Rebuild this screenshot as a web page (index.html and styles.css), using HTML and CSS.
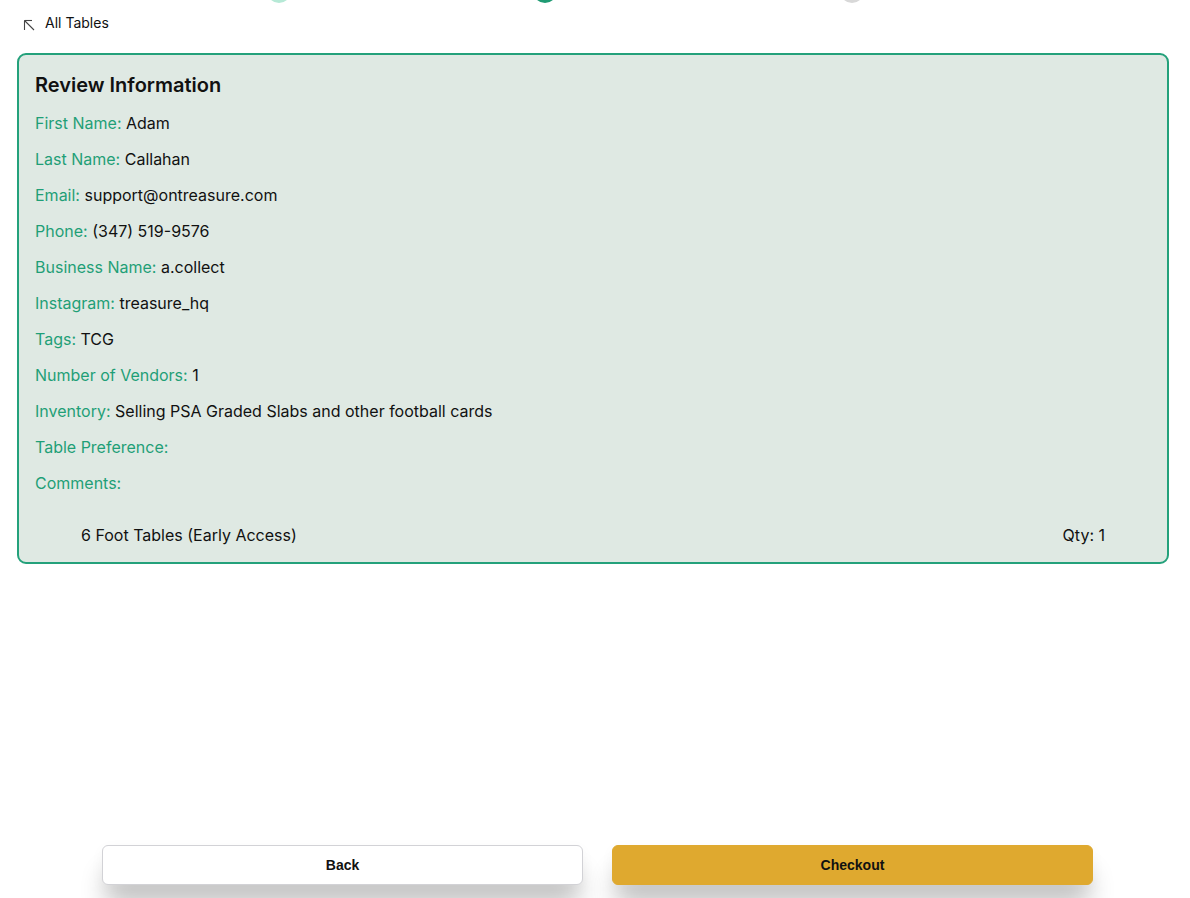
FILE: index.html
```html
<!DOCTYPE html>
<html lang="en">
<head>
<meta charset="utf-8">
<title>Review Information</title>
<link rel="stylesheet" href="styles.css">
</head>
<body>
<div class="page">
  <div class="stepper">
    <span class="step step-done"></span>
    <span class="step step-active"></span>
    <span class="step step-todo"></span>
  </div>
  <a class="back-link" href="#">
    <svg class="back-icon" width="14" height="14" viewBox="0 0 14 14" fill="none" stroke="#444" stroke-width="1.1">
      <path d="M2.5 2.5 L12 12"/>
      <path d="M2.5 2.5 L2.5 12"/>
      <path d="M2.5 2.5 L10 2.5"/>
    </svg>
    <span>All Tables</span>
  </a>
  <section class="card">
    <h2 class="card-title">Review Information</h2>
    <p class="row"><span class="label">First Name:</span> Adam</p>
    <p class="row"><span class="label">Last Name:</span> Callahan</p>
    <p class="row"><span class="label">Email:</span> support@ontreasure.com</p>
    <p class="row"><span class="label">Phone:</span> (347) 519-9576</p>
    <p class="row"><span class="label">Business Name:</span> a.collect</p>
    <p class="row"><span class="label">Instagram:</span> treasure_hq</p>
    <p class="row"><span class="label">Tags:</span> TCG</p>
    <p class="row"><span class="label">Number of Vendors:</span> 1</p>
    <p class="row"><span class="label">Inventory:</span> Selling PSA Graded Slabs and other football cards</p>
    <p class="row"><span class="label">Table Preference:</span></p>
    <p class="row"><span class="label">Comments:</span></p>
    <div class="item">
      <span>6 Foot Tables (Early Access)</span>
      <span>Qty: 1</span>
    </div>
  </section>
  <footer class="footer">
    <button class="btn btn-back">Back</button>
    <button class="btn btn-checkout">Checkout</button>
  </footer>
</div>
</body>
</html>
```
FILE: styles.css
```css
* { box-sizing: border-box; }
html, body { margin: 0; padding: 0; background: #fff; }
body {
  font-family: Inter, "Noto Sans", sans-serif;
  color: #111;
  overflow: hidden;
}
.page {
  min-height: 100vh;
  height: 898px;
  display: flex;
  flex-direction: column;
  padding: 0 21px 0 17px;
}
.stepper {
  height: 3px;
  display: flex;
  align-items: flex-end;
  padding-left: 250px;
  overflow: hidden;
}
.step {
  width: 24px;
  height: 24px;
  border-radius: 50%;
  flex: none;
  margin-bottom: 0;
}
.step-done { background: #b6e9d6; }
.step-active { background: #1f9b73; margin-left: 242px; }
.step-todo { background: #d8d8d8; margin-left: 283px; }
.back-link {
  display: flex;
  align-items: center;
  gap: 9px;
  margin-top: 10px;
  height: 20px;
  padding-left: 5px;
  color: #111;
  text-decoration: none;
  font-size: 14px;
  line-height: 20px;
}
.back-icon { flex: none; margin-top: 3px; }
.card {
  margin-top: 20px;
  border: 2px solid #24a17b;
  border-radius: 9px;
  background: #dfe9e3;
  padding: 16px 16px 15px;
}
.card-title {
  margin: 0;
  font-size: 20px;
  line-height: 28px;
  font-weight: 600;
  color: #111;
}
.row {
  margin: 12px 0 0;
  font-size: 16px;
  line-height: 24px;
  color: #111;
}
.label { color: #1f9f77; }
.item {
  margin-top: 28px;
  display: flex;
  justify-content: space-between;
  padding: 0 46px;
  font-size: 16px;
  line-height: 24px;
}
.footer {
  margin-top: auto;
  display: flex;
  justify-content: center;
  gap: 29px;
  padding: 0 0 13px 5px;
  margin-left: -17px;
  margin-right: -21px;
  box-shadow: 0 -30px 40px -25px rgba(0,0,0,0.035);
}
.btn {
  width: 481px;
  height: 40px;
  border-radius: 6px;
  font-family: "Liberation Sans", Arial, sans-serif;
  font-weight: 700;
  font-size: 14px;
  color: #111;
  cursor: pointer;
  box-shadow: 0 24px 26px -4px rgba(0,0,0,0.24), 0 4px 14px rgba(0,0,0,0.04);
}
.btn-back {
  background: #fff;
  border: 1px solid #d2d2d6;
}
.btn-checkout {
  background: #dfa92f;
  border: 1px solid #dfa92f;
}
```
